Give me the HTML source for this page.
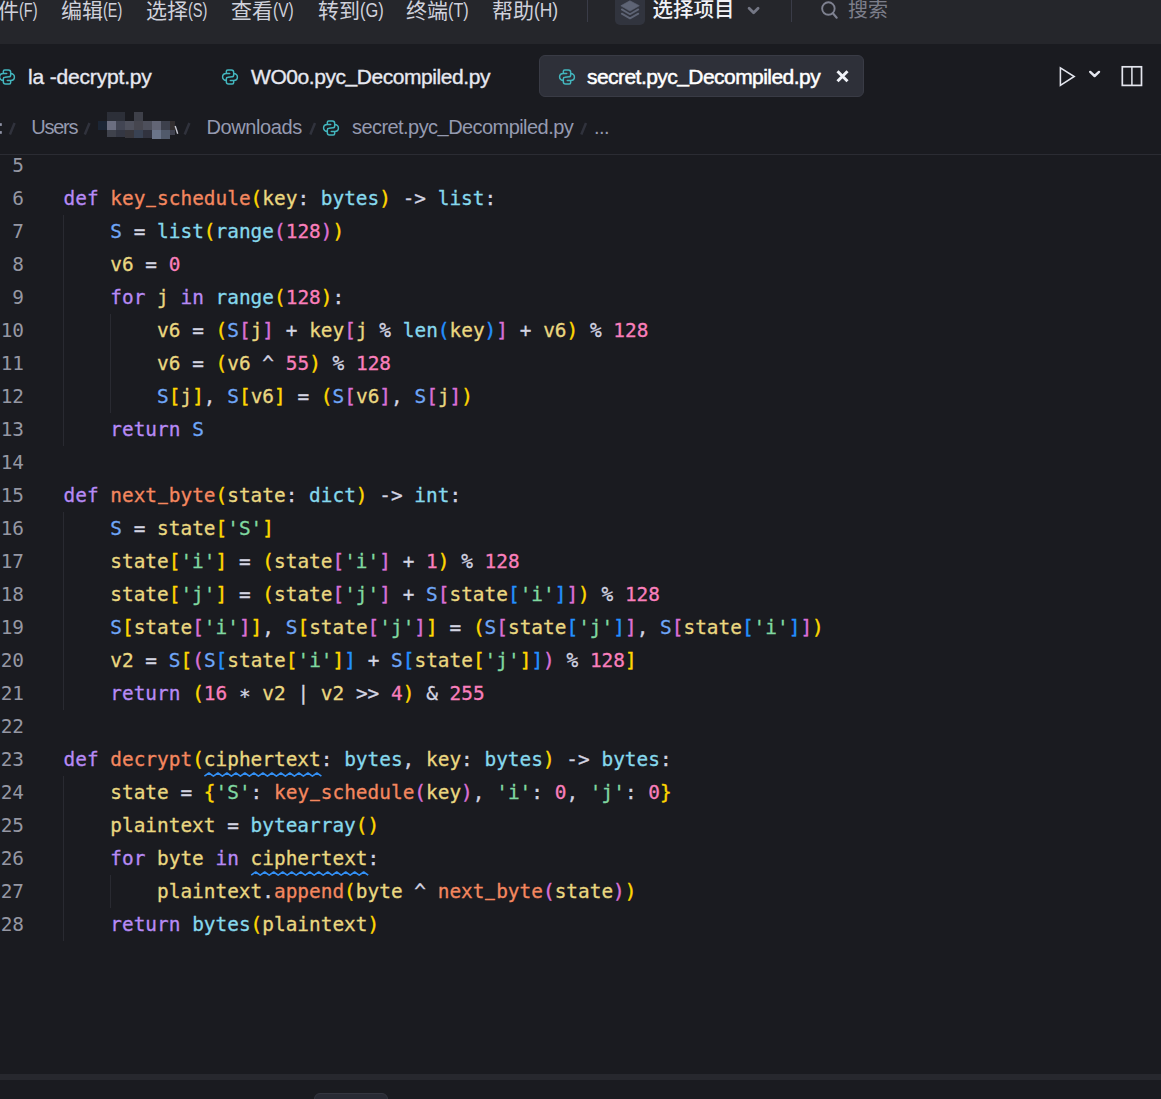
<!DOCTYPE html>
<html lang="zh-CN">
<head>
<meta charset="utf-8">
<title>secret.pyc_Decompiled.py</title>
<style>
*{box-sizing:border-box;margin:0;padding:0}
html,body{width:1161px;height:1099px;overflow:hidden;background:#1a1b20}
body{position:relative;font-family:"Liberation Sans","Noto Sans CJK SC",sans-serif;color:#d4d6e0}
.abs{position:absolute}
#menubar{left:0;top:0;width:1161px;height:44px;background:#25262b}
#menubar .la{display:inline-block;font-size:20px;transform:translateY(-1px) scaleX(.72);transform-origin:0 50%;margin-left:-0.5px}
#menubar .mi{position:absolute;top:-4px;height:30px;line-height:30px;font-size:21px;color:#cfd1db;white-space:nowrap}
#tabbar{left:0;top:44px;width:1161px;height:59px;background:#1a1b20}
.tab{position:absolute;top:22px;height:26px;line-height:26px;font-size:21px;color:#e6e8f0;white-space:nowrap;letter-spacing:-0.2px;-webkit-text-stroke:0.35px #e6e8f0}
#activetab{left:539px;top:55px;width:325px;height:42px;background:#2e3039;border:1px solid #393b45;border-radius:6px}
#crumbs{left:0;top:103px;width:1161px;height:52px;background:#1a1b20;border-bottom:1px solid #2b2c33}
.cr{position:absolute;top:12.2px;height:24px;line-height:24px;font-size:20px;color:#959ab0;white-space:nowrap;letter-spacing:-0.56px}
.sep{color:#555764}
#editor{left:0;top:155px;width:1161px;height:919px;background:#1a1b20}
.ln{position:absolute;left:-40px;width:64px;text-align:right;height:33px;line-height:33px;color:#9597a3}
.cl{position:absolute;left:63.5px;height:33px;line-height:33px;white-space:pre;-webkit-text-stroke:0.3px;letter-spacing:0.016px}
.u2{display:inline-block;transform:translateY(-1.8px)}
.as{display:inline-block;transform:translateY(3px)}
.u{display:inline-block;transform:translateY(-3.5px) scaleX(.8);-webkit-text-stroke:0.8px}
.mono{font-family:"DejaVu Sans Mono","Liberation Mono",monospace;font-size:19.4px}
.k{color:#b78af5}.f{color:#f4875f}.v{color:#ead780}.c{color:#6fa6f7}.t{color:#86d8ec}.n{color:#f97fbb}.s{color:#80d8a0}.o{color:#d3d4e2}
.b1{color:#ffd700}.b2{color:#da70d6}.b3{color:#2390ff}
.b1,.b2,.b3{-webkit-text-stroke:0.42px}
.guide{position:absolute;width:1px;background:#292a31}
#hbar{left:0;top:1074px;width:1161px;height:6px;background:#27282e}
#bottom{left:0;top:1080px;width:1161px;height:19px;background:#1a1b20}
#chip{left:314px;top:1093px;width:74px;height:20px;background:#282a33;border:1px solid #34363f;border-radius:6px}
</style>
</head>
<body>
<div id="menubar" class="abs">
<span class="mi" style="left:-23px">文件<span class="la" style="transform:translateY(-1px) scaleX(0.725)">(F)</span></span>
<span class="mi" style="left:61px">编辑<span class="la" style="transform:translateY(-1px) scaleX(0.72)">(E)</span></span>
<span class="mi" style="left:146px">选择<span class="la" style="transform:translateY(-1px) scaleX(0.73)">(S)</span></span>
<span class="mi" style="left:231px">查看<span class="la" style="transform:translateY(-1px) scaleX(0.77)">(V)</span></span>
<span class="mi" style="left:318px">转到<span class="la" style="transform:translateY(-1px) scaleX(0.82)">(G)</span></span>
<span class="mi" style="left:406px">终端<span class="la" style="transform:translateY(-1px) scaleX(0.81)">(T)</span></span>
<span class="mi" style="left:492px">帮助<span class="la" style="transform:translateY(-1px) scaleX(0.87)">(H)</span></span>
<span class="mi" style="left:652.5px;top:-5px;color:#f0f1f6;font-weight:500;font-size:20.5px">选择项目</span>
<span class="mi" style="left:848px;top:-5px;color:#7c7e8a;font-size:20px">搜索</span>
</div>
<div id="tabbar" class="abs"></div>
<div id="activetab" class="abs"></div>
<span class="tab abs" style="left:28px;top:63.8px;letter-spacing:-0.17px">la -decrypt.py</span>
<span class="tab abs" style="left:251px;top:63.8px;letter-spacing:-0.44px">WO0o.pyc<span class="u2">_</span>Decompiled.py</span>
<span class="tab abs" style="left:587px;top:63.8px;letter-spacing:-0.55px;color:#fff;-webkit-text-stroke:0.5px #fff">secret.pyc<span class="u2">_</span>Decompiled.py</span>
<div id="crumbs" class="abs">
<span class="cr" style="left:31.2px;letter-spacing:-1.25px">Users</span>
<span class="cr" style="left:206.5px;letter-spacing:-0.4px">Downloads</span>
<span class="cr" style="left:352px">secret.pyc<span class="u2">_</span>Decompiled.py</span>
<span class="cr" style="left:594px">...</span>
</div>
<svg class="abs" style="left:220.05px;top:67.02px" width="20" height="20" viewBox="-10 -10 20 20" fill="none" stroke="#43b6be" stroke-width="1.5" stroke-linecap="round" stroke-linejoin="round"><path d="M-3.68 -3.5V-5.6Q-3.68 -7.04 -2.23 -7.04H1.4Q3.68 -7.04 3.68 -4.76V-1.9Q3.68 -0.2 2 -0.2L-2 0.2Q-3.68 0.2 -3.68 1.9V4.76Q-3.68 7.04 -1.4 7.04H2.23Q3.68 7.04 3.68 5.6V3.5M-3.68 -3.5H-0.3M3.68 3.5H0.3M-3.68 -3.5C-5.75 -3.5 -7.42 -2 -7.42 0C-7.42 2 -5.75 3.45 -3.68 3.45M3.68 3.5C5.75 3.5 7.42 2 7.42 0C7.42 -2 5.75 -3.45 3.68 -3.45"/></svg>
<svg class="abs" style="left:557.2px;top:67.25px" width="20" height="20" viewBox="-10 -10 20 20" fill="none" stroke="#43b6be" stroke-width="1.5" stroke-linecap="round" stroke-linejoin="round"><path d="M-3.68 -3.5V-5.6Q-3.68 -7.04 -2.23 -7.04H1.4Q3.68 -7.04 3.68 -4.76V-1.9Q3.68 -0.2 2 -0.2L-2 0.2Q-3.68 0.2 -3.68 1.9V4.76Q-3.68 7.04 -1.4 7.04H2.23Q3.68 7.04 3.68 5.6V3.5M-3.68 -3.5H-0.3M3.68 3.5H0.3M-3.68 -3.5C-5.75 -3.5 -7.42 -2 -7.42 0C-7.42 2 -5.75 3.45 -3.68 3.45M3.68 3.5C5.75 3.5 7.42 2 7.42 0C7.42 -2 5.75 -3.45 3.68 -3.45"/></svg>
<svg class="abs" style="left:321.2px;top:118.05px" width="20" height="20" viewBox="-10 -10 20 20" fill="none" stroke="#43b6be" stroke-width="1.5" stroke-linecap="round" stroke-linejoin="round"><path d="M-3.68 -3.5V-5.6Q-3.68 -7.04 -2.23 -7.04H1.4Q3.68 -7.04 3.68 -4.76V-1.9Q3.68 -0.2 2 -0.2L-2 0.2Q-3.68 0.2 -3.68 1.9V4.76Q-3.68 7.04 -1.4 7.04H2.23Q3.68 7.04 3.68 5.6V3.5M-3.68 -3.5H-0.3M3.68 3.5H0.3M-3.68 -3.5C-5.75 -3.5 -7.42 -2 -7.42 0C-7.42 2 -5.75 3.45 -3.68 3.45M3.68 3.5C5.75 3.5 7.42 2 7.42 0C7.42 -2 5.75 -3.45 3.68 -3.45"/></svg>
<svg class="abs" style="left:-3.0px;top:67.02px" width="20" height="20" viewBox="-10 -10 20 20" fill="none" stroke="#43b6be" stroke-width="1.5" stroke-linecap="round" stroke-linejoin="round"><path d="M-3.68 -3.5V-5.6Q-3.68 -7.04 -2.23 -7.04H1.4Q3.68 -7.04 3.68 -4.76V-1.9Q3.68 -0.2 2 -0.2L-2 0.2Q-3.68 0.2 -3.68 1.9V4.76Q-3.68 7.04 -1.4 7.04H2.23Q3.68 7.04 3.68 5.6V3.5M-3.68 -3.5H-0.3M3.68 3.5H0.3M-3.68 -3.5C-5.75 -3.5 -7.42 -2 -7.42 0C-7.42 2 -5.75 3.45 -3.68 3.45M3.68 3.5C5.75 3.5 7.42 2 7.42 0C7.42 -2 5.75 -3.45 3.68 -3.45"/></svg>
<div class="abs" style="left:615px;top:-6px;width:30px;height:31px;background:#31343e;border-radius:5px"></div>
<svg class="abs" style="left:615px;top:0" width="30" height="25" viewBox="615 0 30 25"><path d="M629.9 0.7L639.3 5.7L630 11.1L620.8 5.8Z" fill="#5e6475" stroke="#5e6475" stroke-width="0.6" stroke-linejoin="round"/><path d="M621.8 9.4L630 14.2L638.3 9.4" fill="none" stroke="#5e6475" stroke-width="1.8" stroke-linecap="round" stroke-linejoin="round"/><path d="M621.8 13.6L630 18.4L638.3 13.6" fill="none" stroke="#5e6475" stroke-width="1.8" stroke-linecap="round" stroke-linejoin="round"/></svg>
<svg class="abs" style="left:745px;top:4px" width="18" height="12" viewBox="745 4 18 12"><path d="M749.1 8.2L753.6 12.7L758.1 8.2" fill="none" stroke="#747785" stroke-width="2.8" stroke-linecap="round" stroke-linejoin="round"/></svg>
<div class="abs" style="left:587px;top:0;width:1px;height:22px;background:#3a3c48"></div>
<div class="abs" style="left:791px;top:0;width:1px;height:22px;background:#3a3c48"></div>
<svg class="abs" style="left:818px;top:0" width="24" height="22" viewBox="818 0 24 22"><circle cx="828.4" cy="8.55" r="6.25" fill="none" stroke="#7e8190" stroke-width="1.9"/><path d="M832.9 13.2L836.7 17.7" stroke="#7e8190" stroke-width="2.1" stroke-linecap="round"/></svg>
<svg class="abs" style="left:1055px;top:62px" width="92" height="30" viewBox="1055 62 92 30"><path d="M1060.4 67.8L1074.2 76.5L1060.4 85.4Z" fill="none" stroke="#e4e6ee" stroke-width="1.55" stroke-linejoin="miter"/><path d="M1090.2 71.9L1094.6 76L1099 71.9" fill="none" stroke="#e4e6ee" stroke-width="2.4" stroke-linecap="round" stroke-linejoin="round"/><rect x="1122.3" y="66.8" width="19.2" height="18.6" fill="none" stroke="#e4e6ee" stroke-width="1.7"/><path d="M1131.9 66.8V85.4" stroke="#e4e6ee" stroke-width="1.5"/></svg>
<svg class="abs" style="left:832px;top:66px" width="20" height="20" viewBox="832 66 20 20"><path d="M837.5 71.2L847.5 81.2M847.5 71.2L837.5 81.2" stroke="#f0f2f8" stroke-width="3" stroke-linecap="butt"/></svg>
<div class="abs" style="left:107px;top:112px;width:9px;height:9px;background:#2c2f38"></div>
<div class="abs" style="left:116px;top:112px;width:9px;height:9px;background:#2c2f38"></div>
<div class="abs" style="left:134px;top:112px;width:9px;height:9px;background:#3e4049"></div>
<div class="abs" style="left:98px;top:121px;width:9px;height:9px;background:#1c2635"></div>
<div class="abs" style="left:107px;top:121px;width:9px;height:9px;background:#6b6e80"></div>
<div class="abs" style="left:116px;top:121px;width:9px;height:9px;background:#424553"></div>
<div class="abs" style="left:125px;top:121px;width:9px;height:9px;background:#4e505c"></div>
<div class="abs" style="left:134px;top:121px;width:9px;height:9px;background:#46464f"></div>
<div class="abs" style="left:143px;top:121px;width:9px;height:9px;background:#4d4f5b"></div>
<div class="abs" style="left:152px;top:121px;width:9px;height:9px;background:#626575"></div>
<div class="abs" style="left:161px;top:121px;width:9px;height:9px;background:#3d404c"></div>
<div class="abs" style="left:170px;top:121px;width:4.5px;height:9px;background:#332f30"></div>
<div class="abs" style="left:107px;top:130px;width:9px;height:6.5px;background:#3f424c"></div>
<div class="abs" style="left:116px;top:130px;width:9px;height:6.5px;background:#343743"></div>
<div class="abs" style="left:125px;top:130px;width:9px;height:8px;background:#38373d"></div>
<div class="abs" style="left:134px;top:130px;width:9px;height:8px;background:#394253"></div>
<div class="abs" style="left:143px;top:130px;width:9px;height:8px;background:#31333f"></div>
<div class="abs" style="left:152px;top:130px;width:9px;height:8.5px;background:#6a7489"></div>
<div class="abs" style="left:161px;top:130px;width:9px;height:8.5px;background:#515a6b"></div>
<div class="abs" style="left:170px;top:130px;width:4.5px;height:5px;background:#40424f"></div>
<svg class="abs" style="left:172px;top:122px" width="8" height="14" viewBox="172 122 8 14"><path d="M175.2 126L177.7 133.8" stroke="#c9c9d2" stroke-width="1.4"/></svg>
<svg class="abs" style="left:0;top:118px" width="620" height="20" viewBox="0 118 620 20"><path d="M9.9 134.5L14.600000000000001 123.1M84.8 134.5L89.5 123.1M184.7 134.5L189.39999999999998 123.1M310.3 134.5L315.0 123.1M581.3 134.5L586.0 123.1" stroke="#30323c" stroke-width="2.5" fill="none"/><rect x="-1" y="123.2" width="2.8" height="2.7" fill="#8f93a6"/><rect x="-1" y="131.1" width="2.8" height="2.7" fill="#8f93a6"/></svg>
<div id="editor" class="abs mono">
<div class="ln" style="top:-6.5px">5</div>
<div class="ln" style="top:26.5px">6</div>
<div class="cl" style="top:26.5px"><span class="k">def</span> <span class="f">key<span class="u">_</span>schedule</span><span class="b1">(</span><span class="v">key</span><span class="o">:</span> <span class="t">bytes</span><span class="b1">)</span> <span class="o">-&gt;</span> <span class="t">list</span><span class="o">:</span></div>
<div class="ln" style="top:59.5px">7</div>
<div class="cl" style="top:59.5px">    <span class="c">S</span> <span class="o">=</span> <span class="t">list</span><span class="b1">(</span><span class="t">range</span><span class="b2">(</span><span class="n">128</span><span class="b2">)</span><span class="b1">)</span></div>
<div class="ln" style="top:92.5px">8</div>
<div class="cl" style="top:92.5px">    <span class="v">v6</span> <span class="o">=</span> <span class="n">0</span></div>
<div class="ln" style="top:125.5px">9</div>
<div class="cl" style="top:125.5px">    <span class="k">for</span> <span class="v">j</span> <span class="k">in</span> <span class="t">range</span><span class="b1">(</span><span class="n">128</span><span class="b1">)</span><span class="o">:</span></div>
<div class="ln" style="top:158.5px">10</div>
<div class="cl" style="top:158.5px">        <span class="v">v6</span> <span class="o">=</span> <span class="b1">(</span><span class="c">S</span><span class="b2">[</span><span class="v">j</span><span class="b2">]</span> <span class="o">+</span> <span class="v">key</span><span class="b2">[</span><span class="v">j</span> <span class="o">%</span> <span class="t">len</span><span class="b3">(</span><span class="v">key</span><span class="b3">)</span><span class="b2">]</span> <span class="o">+</span> <span class="v">v6</span><span class="b1">)</span> <span class="o">%</span> <span class="n">128</span></div>
<div class="ln" style="top:191.5px">11</div>
<div class="cl" style="top:191.5px">        <span class="v">v6</span> <span class="o">=</span> <span class="b1">(</span><span class="v">v6</span> <span class="o">^</span> <span class="n">55</span><span class="b1">)</span> <span class="o">%</span> <span class="n">128</span></div>
<div class="ln" style="top:224.5px">12</div>
<div class="cl" style="top:224.5px">        <span class="c">S</span><span class="b1">[</span><span class="v">j</span><span class="b1">]</span><span class="o">,</span> <span class="c">S</span><span class="b1">[</span><span class="v">v6</span><span class="b1">]</span> <span class="o">=</span> <span class="b1">(</span><span class="c">S</span><span class="b2">[</span><span class="v">v6</span><span class="b2">]</span><span class="o">,</span> <span class="c">S</span><span class="b2">[</span><span class="v">j</span><span class="b2">]</span><span class="b1">)</span></div>
<div class="ln" style="top:257.5px">13</div>
<div class="cl" style="top:257.5px">    <span class="k">return</span> <span class="c">S</span></div>
<div class="ln" style="top:290.5px">14</div>
<div class="ln" style="top:323.5px">15</div>
<div class="cl" style="top:323.5px"><span class="k">def</span> <span class="f">next<span class="u">_</span>byte</span><span class="b1">(</span><span class="v">state</span><span class="o">:</span> <span class="t">dict</span><span class="b1">)</span> <span class="o">-&gt;</span> <span class="t">int</span><span class="o">:</span></div>
<div class="ln" style="top:356.5px">16</div>
<div class="cl" style="top:356.5px">    <span class="c">S</span> <span class="o">=</span> <span class="v">state</span><span class="b1">[</span><span class="s">'S'</span><span class="b1">]</span></div>
<div class="ln" style="top:389.5px">17</div>
<div class="cl" style="top:389.5px">    <span class="v">state</span><span class="b1">[</span><span class="s">'i'</span><span class="b1">]</span> <span class="o">=</span> <span class="b1">(</span><span class="v">state</span><span class="b2">[</span><span class="s">'i'</span><span class="b2">]</span> <span class="o">+</span> <span class="n">1</span><span class="b1">)</span> <span class="o">%</span> <span class="n">128</span></div>
<div class="ln" style="top:422.5px">18</div>
<div class="cl" style="top:422.5px">    <span class="v">state</span><span class="b1">[</span><span class="s">'j'</span><span class="b1">]</span> <span class="o">=</span> <span class="b1">(</span><span class="v">state</span><span class="b2">[</span><span class="s">'j'</span><span class="b2">]</span> <span class="o">+</span> <span class="c">S</span><span class="b2">[</span><span class="v">state</span><span class="b3">[</span><span class="s">'i'</span><span class="b3">]</span><span class="b2">]</span><span class="b1">)</span> <span class="o">%</span> <span class="n">128</span></div>
<div class="ln" style="top:455.5px">19</div>
<div class="cl" style="top:455.5px">    <span class="c">S</span><span class="b1">[</span><span class="v">state</span><span class="b2">[</span><span class="s">'i'</span><span class="b2">]</span><span class="b1">]</span><span class="o">,</span> <span class="c">S</span><span class="b1">[</span><span class="v">state</span><span class="b2">[</span><span class="s">'j'</span><span class="b2">]</span><span class="b1">]</span> <span class="o">=</span> <span class="b1">(</span><span class="c">S</span><span class="b2">[</span><span class="v">state</span><span class="b3">[</span><span class="s">'j'</span><span class="b3">]</span><span class="b2">]</span><span class="o">,</span> <span class="c">S</span><span class="b2">[</span><span class="v">state</span><span class="b3">[</span><span class="s">'i'</span><span class="b3">]</span><span class="b2">]</span><span class="b1">)</span></div>
<div class="ln" style="top:488.5px">20</div>
<div class="cl" style="top:488.5px">    <span class="v">v2</span> <span class="o">=</span> <span class="c">S</span><span class="b1">[</span><span class="b2">(</span><span class="c">S</span><span class="b3">[</span><span class="v">state</span><span class="b1">[</span><span class="s">'i'</span><span class="b1">]</span><span class="b3">]</span> <span class="o">+</span> <span class="c">S</span><span class="b3">[</span><span class="v">state</span><span class="b1">[</span><span class="s">'j'</span><span class="b1">]</span><span class="b3">]</span><span class="b2">)</span> <span class="o">%</span> <span class="n">128</span><span class="b1">]</span></div>
<div class="ln" style="top:521.5px">21</div>
<div class="cl" style="top:521.5px">    <span class="k">return</span> <span class="b1">(</span><span class="n">16</span> <span class="o"><span class="as">*</span></span> <span class="v">v2</span> <span class="o">|</span> <span class="v">v2</span> <span class="o">&gt;&gt;</span> <span class="n">4</span><span class="b1">)</span> <span class="o">&amp;</span> <span class="n">255</span></div>
<div class="ln" style="top:554.5px">22</div>
<div class="ln" style="top:587.5px">23</div>
<div class="cl" style="top:587.5px"><span class="k">def</span> <span class="f">decrypt</span><span class="b1">(</span><span class="v">ciphertext</span><span class="o">:</span> <span class="t">bytes</span><span class="o">,</span> <span class="v">key</span><span class="o">:</span> <span class="t">bytes</span><span class="b1">)</span> <span class="o">-&gt;</span> <span class="t">bytes</span><span class="o">:</span></div>
<div class="ln" style="top:620.5px">24</div>
<div class="cl" style="top:620.5px">    <span class="v">state</span> <span class="o">=</span> <span class="b1">{</span><span class="s">'S'</span><span class="o">:</span> <span class="f">key<span class="u">_</span>schedule</span><span class="b2">(</span><span class="v">key</span><span class="b2">)</span><span class="o">,</span> <span class="s">'i'</span><span class="o">:</span> <span class="n">0</span><span class="o">,</span> <span class="s">'j'</span><span class="o">:</span> <span class="n">0</span><span class="b1">}</span></div>
<div class="ln" style="top:653.5px">25</div>
<div class="cl" style="top:653.5px">    <span class="v">plaintext</span> <span class="o">=</span> <span class="t">bytearray</span><span class="b1">(</span><span class="b1">)</span></div>
<div class="ln" style="top:686.5px">26</div>
<div class="cl" style="top:686.5px">    <span class="k">for</span> <span class="v">byte</span> <span class="k">in</span> <span class="v">ciphertext</span><span class="o">:</span></div>
<div class="ln" style="top:719.5px">27</div>
<div class="cl" style="top:719.5px">        <span class="v">plaintext</span><span class="o">.</span><span class="f">append</span><span class="b1">(</span><span class="v">byte</span> <span class="o">^</span> <span class="f">next<span class="u">_</span>byte</span><span class="b2">(</span><span class="v">state</span><span class="b2">)</span><span class="b1">)</span></div>
<div class="ln" style="top:752.5px">28</div>
<div class="cl" style="top:752.5px">    <span class="k">return</span> <span class="t">bytes</span><span class="b1">(</span><span class="v">plaintext</span><span class="b1">)</span></div>
<div class="guide" style="left:63px;top:59.5px;height:231px"></div>
<div class="guide" style="left:63px;top:356.5px;height:198px"></div>
<div class="guide" style="left:63px;top:620.5px;height:165px"></div>
<div class="guide" style="left:110px;top:158.5px;height:99px"></div>
<div class="guide" style="left:110px;top:719.5px;height:33px"></div>
<svg class="abs" style="left:0;top:614.5px" width="400" height="10" viewBox="0 614.5 400 10"><path d="M204.4 620.7L208.9 617.5L213.4 620.7L217.9 617.5L222.4 620.7L226.9 617.5L231.4 620.7L235.9 617.5L240.4 620.7L244.9 617.5L249.4 620.7L253.9 617.5L258.4 620.7L262.9 617.5L267.4 620.7L271.9 617.5L276.4 620.7L280.9 617.5L285.4 620.7L289.9 617.5L294.4 620.7L298.9 617.5L303.4 620.7L307.9 617.5L312.4 620.7L316.9 617.5L321.4 620.7" fill="none" stroke="#3390f5" stroke-width="1.6" stroke-linejoin="round"/></svg>
<svg class="abs" style="left:0;top:713.5px" width="400" height="10" viewBox="0 713.5 400 10"><path d="M251.2 719.7L255.7 716.5L260.2 719.7L264.7 716.5L269.2 719.7L273.7 716.5L278.2 719.7L282.7 716.5L287.2 719.7L291.7 716.5L296.2 719.7L300.7 716.5L305.2 719.7L309.7 716.5L314.2 719.7L318.7 716.5L323.2 719.7L327.7 716.5L332.2 719.7L336.7 716.5L341.2 719.7L345.7 716.5L350.2 719.7L354.7 716.5L359.2 719.7L363.7 716.5L368.2 719.7" fill="none" stroke="#3390f5" stroke-width="1.6" stroke-linejoin="round"/></svg>
</div>
<div id="hbar" class="abs"></div>
<div id="bottom" class="abs"></div>
<div id="chip" class="abs"></div>
</body>
</html>
